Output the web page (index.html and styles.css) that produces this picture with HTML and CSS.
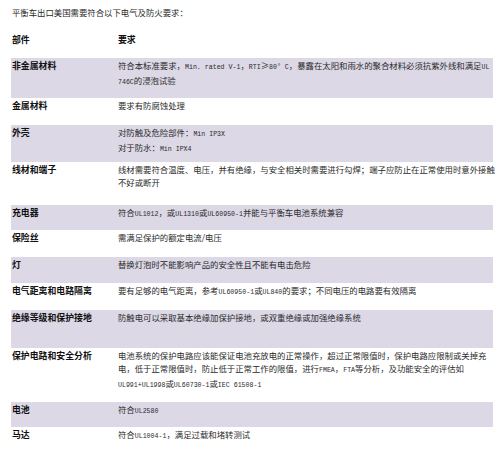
FILE: index.html
```html
<!DOCTYPE html>
<html lang="zh">
<head>
<meta charset="utf-8">
<title>平衡车出口美国要求</title>
<link rel="stylesheet" href="styles.css">
</head>
<body>
<div class="page">
  <p class="title">平衡车出口美国需要符合以下电气及防火要求：</p>
  <div class="table">
    <div class="row h26">
      <div class="k">部件</div>
      <div class="v b">要求</div>
    </div>
    <div class="row shade h40">
      <div class="k">非金属材料</div>
      <div class="v">符合本标准要求，<span class="en">Min. rated V-1</span>，<span class="en">RTI</span>≥<span class="en">80° C</span>，暴露在太阳和雨水的聚合材料必须抗紫外线和满足<span class="en">UL</span><br><span class="en">746C</span>的浸泡试验</div>
    </div>
    <div class="row h27">
      <div class="k">金属材料</div>
      <div class="v">要求有防腐蚀处理</div>
    </div>
    <div class="row shade h37">
      <div class="k">外壳</div>
      <div class="v">对防触及危险部件：<span class="en">Min IP3X</span><br>对于防水：<span class="en">Min IPX4</span></div>
    </div>
    <div class="row h43">
      <div class="k">线材和端子</div>
      <div class="v">线材需要符合温度、电压，并有绝缘，与安全相关时需要进行勾焊；端子应防止在正常使用时意外接触<br>不好或断开</div>
    </div>
    <div class="row shade h25">
      <div class="k">充电器</div>
      <div class="v">符合<span class="en">UL1012</span>，或<span class="en">UL1310</span>或<span class="en">UL60950-1</span>并能与平衡车电池系统兼容</div>
    </div>
    <div class="row h27">
      <div class="k">保险丝</div>
      <div class="v">需满足保护的额定电流/电压</div>
    </div>
    <div class="row shade h26">
      <div class="k">灯</div>
      <div class="v">替换灯泡时不能影响产品的安全性且不能有电击危险</div>
    </div>
    <div class="row h27">
      <div class="k">电气距离和电路隔离</div>
      <div class="v">要有足够的电气距离，参考<span class="en">UL60950-1</span>或<span class="en">UL840</span>的要求；不同电压的电路要有效隔离</div>
    </div>
    <div class="row shade h38">
      <div class="k">绝缘等级和保护接地</div>
      <div class="v">防触电可以采取基本绝缘加保护接地，或双重绝缘或加强绝缘系统</div>
    </div>
    <div class="row h54">
      <div class="k">保护电路和安全分析</div>
      <div class="v">电池系统的保护电路应该能保证电池充放电的正常操作，超过正常限值时，保护电路应限制或关掉充<br>电，低于正常限值时，防止低于正常工作的限值，进行<span class="en">FMEA</span>，<span class="en">FTA</span>等分析，及功能安全的评估如<br><span class="en">UL991+UL1998</span>或<span class="en">UL60730-1</span>或<span class="en">IEC 61508-1</span></div>
    </div>
    <div class="row shade h25">
      <div class="k">电池</div>
      <div class="v">符合<span class="en">UL2580</span></div>
    </div>
    <div class="row h25">
      <div class="k">马达</div>
      <div class="v">符合<span class="en">UL1004-1</span>，满足过载和堵转测试</div>
    </div>
  </div>
</div>
</body>
</html>
```

FILE: styles.css
```css
html, body {
  margin: 0;
  padding: 0;
  background: #ffffff;
}

.page {
  padding: 6px 9px 0 11px;
  font-family: "Noto Sans CJK SC", "Noto Sans", sans-serif;
  font-size: 8.4px;
  line-height: 13px;
  color: #2a2a2a;
}

.title {
  margin: 0 0 13px 1px;
  white-space: nowrap;
}

.table {
  display: flex;
  flex-direction: column;
  width: 482px;
}

.row {
  display: grid;
  grid-template-columns: 107px 1fr;
  padding-top: 1px;
  box-sizing: border-box;
}

.shade {
  background: #dcd8e6;
}

.k {
  padding-left: 1px;
  font-weight: 700;
  font-size: 8.9px;
  color: #111111;
  white-space: nowrap;
}

.v {
  white-space: nowrap;
  min-width: 0;
}

.v.b {
  font-weight: 700;
  font-size: 8.9px;
  color: #111111;
}

.en {
  font-family: "Liberation Mono", "DejaVu Sans Mono", monospace;
  font-size: 6.6px;
}

.h25 { height: 25px; }
.h26 { height: 26px; }
.h27 { height: 27px; }
.h37 { height: 37px; }
.h38 { height: 38px; }
.h40 { height: 40px; }
.h43 { height: 43px; }
.h54 { height: 54px; }
```
